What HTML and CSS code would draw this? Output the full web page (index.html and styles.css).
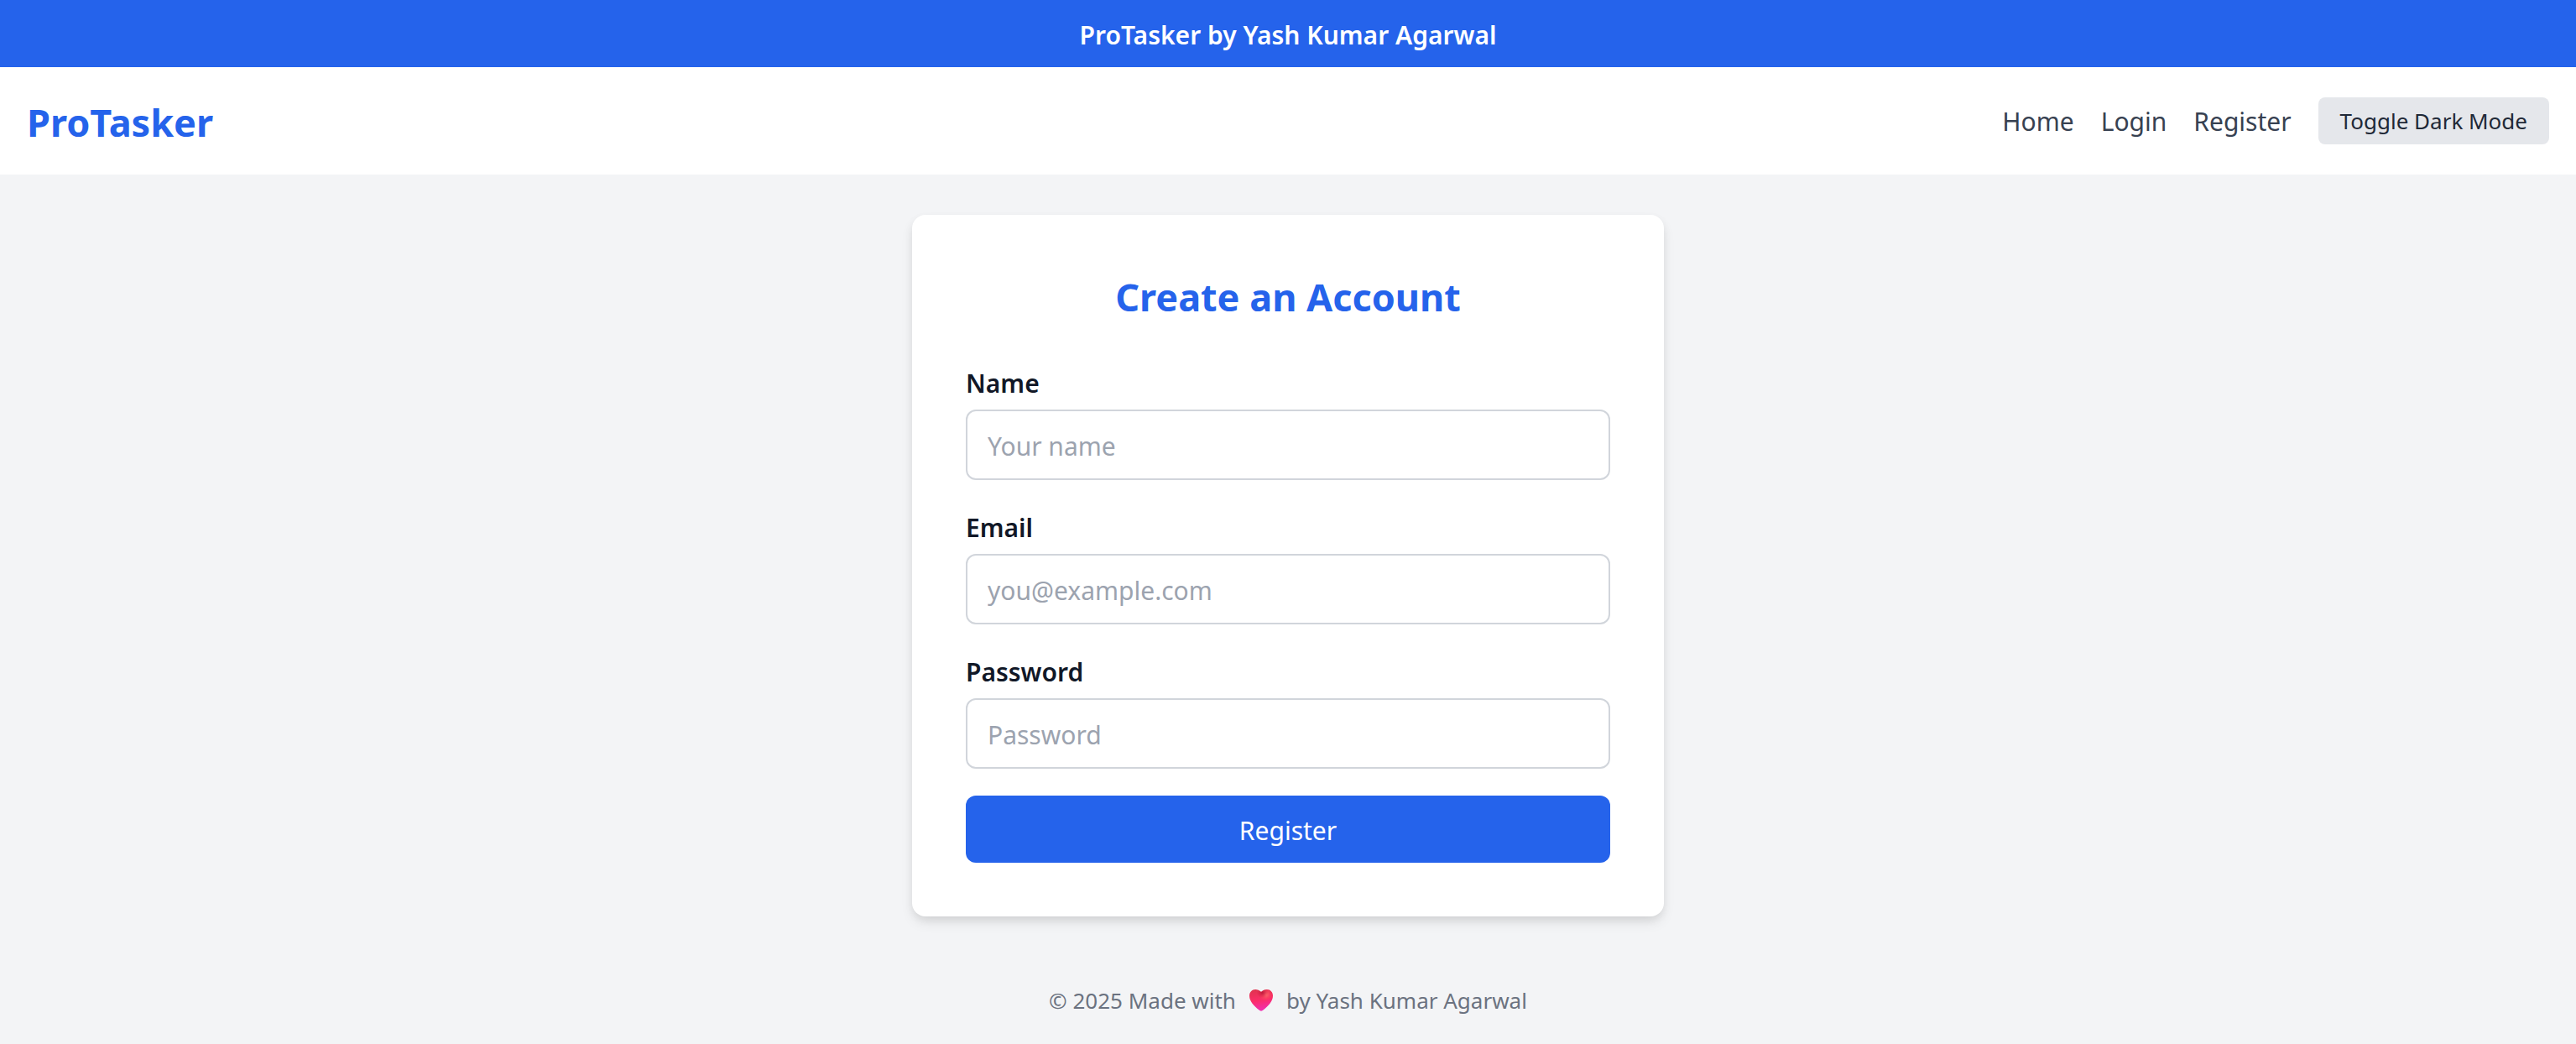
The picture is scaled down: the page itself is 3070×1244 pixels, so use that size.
FILE: index.html
```html
<!DOCTYPE html>
<html lang="en">
<head>
  <meta charset="utf-8">
  <meta name="viewport" content="width=device-width, initial-scale=1">
  <title>ProTasker</title>
  <link rel="stylesheet" href="styles.css">
</head>
<body class="page">
  <div class="banner">ProTasker by Yash Kumar Agarwal</div>
  <header class="header">
    <a class="logo" href="#">ProTasker</a>
    <nav class="nav">
      <a class="nav-link" href="#">Home</a>
      <a class="nav-link" href="#">Login</a>
      <a class="nav-link" href="#">Register</a>
      <button class="theme-toggle" type="button">Toggle Dark Mode</button>
    </nav>
  </header>
  <main class="main">
    <form class="card">
      <h1 class="card-title">Create an Account</h1>
      <div class="field">
        <label class="label" for="name">Name</label>
        <input class="input" id="name" type="text" placeholder="Your name">
      </div>
      <div class="field">
        <label class="label" for="email">Email</label>
        <input class="input" id="email" type="email" placeholder="you@example.com">
      </div>
      <div class="field">
        <label class="label" for="password">Password</label>
        <input class="input" id="password" type="password" placeholder="Password">
      </div>
      <button class="submit" type="submit">Register</button>
    </form>
  </main>
  <footer class="footer">
    <span>© 2025 Made with</span>
    <svg class="heart" viewBox="0 0 28 26" role="img" aria-label="love">
      <defs>
        <linearGradient id="heart-fill" x1="0.3" y1="0" x2="0.5" y2="1">
          <stop offset="0" stop-color="#e0334f"/>
          <stop offset="0.5" stop-color="#fb2d68"/>
          <stop offset="1" stop-color="#f02fb4"/>
        </linearGradient>
        <radialGradient id="heart-light" cx="0.7" cy="0.24" r="0.3">
          <stop offset="0" stop-color="#ff7070"/>
          <stop offset="1" stop-color="#ff4058" stop-opacity="0"/>
        </radialGradient>
        <radialGradient id="heart-shade" cx="0.55" cy="0.15" r="0.25">
          <stop offset="0" stop-color="#c01a3c"/>
          <stop offset="1" stop-color="#d82045" stop-opacity="0"/>
        </radialGradient>
        <path id="heart-shape" d="M14 3C12 1 9.500 0 7.200 0C3 0 0 3.200 0 7.500C0 14 5.500 20 11.500 24.500C13 26 15 26 16.500 24.500C22.500 20 28 14 28 7.500C28 3.200 25 0 20.800 0C18.500 0 16 1 14 3Z"/>
      </defs>
      <use href="#heart-shape" fill="url(#heart-fill)"/>
      <use href="#heart-shape" fill="url(#heart-light)"/>
      <use href="#heart-shape" fill="url(#heart-shade)"/>
    </svg>
    <span>by Yash Kumar Agarwal</span>
  </footer>
</body>
</html>
```
FILE: styles.css
```css
*,
*::before,
*::after {
  box-sizing: border-box;
}

.page {
  margin: 0;
  min-height: 100vh;
  display: flex;
  flex-direction: column;
  background: #f3f4f6;
  color: #111827;
  font-family: "Segoe UI", "Noto Sans", sans-serif;
  font-size: 30px;
  line-height: 48px;
}

button,
input {
  font: inherit;
}

.banner {
  padding: 18px 32px 14px;
  background: #2563eb;
  color: #fff;
  font-weight: 600;
  text-align: center;
}

.header {
  display: flex;
  align-items: center;
  justify-content: space-between;
  padding: 32px;
  background: #fff;
}

.logo {
  padding-top: 4px;
  color: #2563eb;
  font-size: 45px;
  font-weight: 700;
  line-height: 60px;
  text-decoration: none;
}

.nav {
  display: flex;
  align-items: center;
  gap: 32px;
}

.nav-link {
  padding-top: 2px;
  color: #374151;
  text-decoration: none;
}

.theme-toggle {
  padding: 8px 26px;
  border: 0;
  border-radius: 8px;
  background: #e5e7eb;
  color: #1f2937;
  font-size: 26px;
  line-height: 40px;
  cursor: pointer;
}

.main {
  flex: 1;
  padding: 48px 32px;
}

.card {
  display: flex;
  flex-direction: column;
  gap: 32px;
  max-width: 896px;
  margin: 0 auto;
  padding: 64px;
  border-radius: 16px;
  background: #fff;
  box-shadow: 0 8px 16px -2px rgba(0, 0, 0, 0.1), 0 4px 12px -2px rgba(0, 0, 0, 0.08);
}

.card-title {
  margin: 0 0 16px;
  padding-top: 4px;
  color: #2563eb;
  font-size: 45px;
  font-weight: 700;
  line-height: 60px;
  text-align: center;
}

.field {
  display: flex;
  flex-direction: column;
  gap: 8px;
}

.label {
  padding-top: 2px;
  font-weight: 600;
  line-height: 46px;
}

.input {
  width: 100%;
  height: 84px;
  padding: 18px 24px 16px;
  border: 2px solid #d1d5db;
  border-radius: 12px;
  background: #fff;
  color: #111827;
}

.input::placeholder {
  color: #9ca3af;
  opacity: 1;
}

.submit {
  padding: 18px 32px 14px;
  border: 0;
  border-radius: 12px;
  background: #2563eb;
  color: #fff;
  cursor: pointer;
}

.footer {
  display: flex;
  align-items: center;
  justify-content: center;
  gap: 16px;
  padding: 32px;
  color: #6b7280;
  font-size: 26px;
  line-height: 40px;
}

.heart {
  width: 28px;
  height: 26px;
}
```
